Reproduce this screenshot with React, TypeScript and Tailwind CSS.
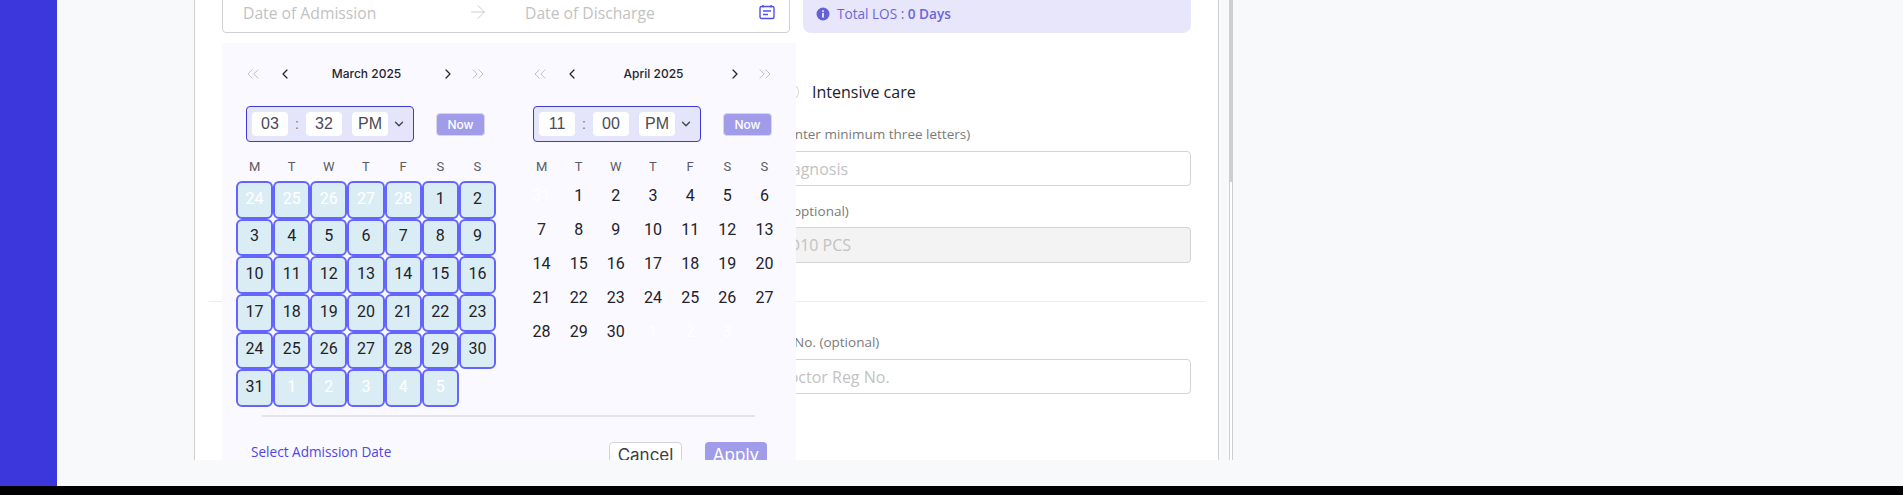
import React from 'react';
import { ArrowRight, ChevronDown, ChevronLeft, ChevronRight, ChevronsLeft, ChevronsRight } from 'lucide-react';

const WEEK = ['M', 'T', 'W', 'T', 'F', 'S', 'S'];

interface Day {
  label: number;
  muted?: boolean;
}

function range(from: number, to: number, muted = false): Day[] {
  const days: Day[] = [];
  for (let i = from; i <= to; i++) days.push({ label: i, muted });
  return days;
}

const MARCH = [...range(24, 28, true), ...range(1, 31), ...range(1, 5, true)];
const APRIL = [{ label: 31, muted: true }, ...range(1, 30), ...range(1, 3, true)];

function TimeField({ value }: { value: string }) {
  return (
    <span className="flex h-[24px] w-[36px] items-center justify-center rounded-[4px] bg-white font-['Liberation_Sans',sans-serif] text-[16px] text-[#4a4a55]">
      {value}
    </span>
  );
}

function Calendar({ title, hour, minute, days, selected }: { title: string; hour: string; minute: string; days: Day[]; selected?: boolean }) {
  return (
    <div className="w-[260px]">
      <div className="mt-[1px] flex h-[20px] items-center pl-[7px] pr-[8px]">
        <ChevronsLeft size={20} strokeWidth={1} className="text-[#b4b4c4]" />
        <ChevronLeft size={16} strokeWidth={1.8} className="ml-[14px] text-[#22222a]" />
        <span className="flex-1 text-center font-['Inter',sans-serif] text-[12px] font-medium text-[#25252d]">{title}</span>
        <ChevronRight size={16} strokeWidth={1.8} className="text-[#22222a]" />
        <ChevronsRight size={20} strokeWidth={1} className="ml-[12px] text-[#b4b4c4]" />
      </div>

      <div className="mt-[22px] flex items-center pl-[10px]">
        <div className="flex h-[36px] w-[168px] items-center rounded-[4px] border border-[#3d38d8] bg-[#e4e4fa] pl-[5px]">
          <TimeField value={hour} />
          <span className="w-[18px] text-center font-['Liberation_Sans',sans-serif] text-[14px] text-[#777]">:</span>
          <TimeField value={minute} />
          <span className="w-[10px]" />
          <TimeField value="PM" />
          <ChevronDown size={14} strokeWidth={2.4} className="ml-[4px] text-[#44444e]" />
        </div>
        <button className="ml-[22px] h-[23px] w-[49px] rounded-[4px] border border-[#d6d6e4] bg-[#a09ce9] pt-[1px] font-['Inter',sans-serif] text-[12px] font-medium text-white">
          Now
        </button>
      </div>

      <div className="mt-[15px] grid h-[18px] grid-cols-7 items-center text-center font-['Roboto',sans-serif] text-[13px] text-[#5a5a64]">
        {WEEK.map((d, i) => (
          <span key={i}>{d}</span>
        ))}
      </div>

      <div className={selected ? 'mt-[6px] grid grid-cols-7' : 'mt-[4px] grid grid-cols-7'}>
        {days.map((d, i) => (
          <span
            key={i}
            className={
              (selected
                ? 'h-[37.67px] rounded-[6px] border-2 border-[#6464ff] bg-[#dbedf4] pb-[2px] '
                : 'h-[34px] ') +
              "flex items-center justify-center font-['Roboto',sans-serif] text-[16px] " +
              (d.muted ? 'text-white' : 'text-[#22222a]')
            }
          >
            {d.label}
          </span>
        ))}
      </div>
    </div>
  );
}

function DatePopup() {
  return (
    <div className="absolute left-[27px] top-[43px] h-[440px] w-[574px] bg-[#faf9ff] pt-[20px]">
      <div className="flex gap-[27px] pl-[14px]">
        <Calendar title="March 2025" hour="03" minute="32" days={MARCH} selected />
        <Calendar title="April 2025" hour="11" minute="00" days={APRIL} />
      </div>
      <div className="ml-[40px] mt-[8px] h-[2px] w-[493px] bg-[#e4e4e8]" />
      <div className="mt-[25px] flex items-start justify-between pl-[29px] pr-[29px]">
        <span className="font-['Open_Sans',sans-serif] text-[13.6px] leading-[20px] text-[#4f46e5]">Select Admission Date</span>
        <div className="flex gap-[23px]">
          <button className="h-[27px] w-[73px] rounded-[4px] border border-[#d4d4d8] bg-white font-['Inter',sans-serif] text-[17px] leading-[25px] text-[#3c3c44]">
            Cancel
          </button>
          <button className="h-[27px] w-[62px] rounded-[4px] bg-[#a09ce9] font-['Inter',sans-serif] text-[17px] leading-[27px] text-white">
            Apply
          </button>
        </div>
      </div>
    </div>
  );
}

function CalendarIcon() {
  return (
    <svg width="16" height="16" viewBox="0 0 16 16" fill="none" stroke="#5050f0" strokeWidth="1.4">
      <rect x="1" y="2.5" width="14" height="12" rx="1.5" />
      <path d="M4 1v2.5M12 1v2.5M4 7h8M4 10.5h5" />
    </svg>
  );
}

function InfoIcon() {
  return (
    <svg width="14" height="14" viewBox="0 0 14 14">
      <circle cx="7" cy="7" r="6.5" fill="#6460d8" />
      <rect x="6.2" y="6" width="1.6" height="4.5" fill="#fff" />
      <rect x="6.2" y="3.4" width="1.6" height="1.6" fill="#fff" />
    </svg>
  );
}

function Label({ children, indent }: { children: React.ReactNode; indent: string }) {
  return <div className={'h-[18px] text-[13.5px] leading-[18px] text-[#7a7a7a] ' + indent}>{children}</div>;
}

function Field({ placeholder, disabled, indent }: { placeholder: string; disabled?: boolean; indent: string }) {
  return (
    <div
      className={
        'flex items-center rounded-[4px] border border-[#d4d4d4] text-[16px] text-[#c2c2c2] ' +
        indent +
        (disabled ? ' h-[36px] bg-[#f3f3f3]' : ' h-[35px] bg-white')
      }
    >
      {placeholder}
    </div>
  );
}

export default function App() {
  return (
    <div className="flex h-[495px] flex-col overflow-hidden bg-black font-['Open_Sans',sans-serif]">
      <div className="flex h-[486px] bg-[#f8f9fb]">
        <div className="w-[57px] bg-[#3b37dc]" />

        <div className="relative ml-[137px] h-[460px] w-[1025px] overflow-hidden border-x border-[#cfcfcf] bg-white">
          <div className="-mt-[10px] ml-[27px] flex gap-[13px]">
            <div className="flex h-[43px] w-[568px] items-center rounded-[4px] border border-[#d0d0d0] pl-[20px] pt-[5px] text-[15.7px] text-[#c2c2c2]">
              <span className="w-[224px]">Date of Admission</span>
              <ArrowRight size={22} strokeWidth={1} className="-mt-[5px] text-[#c8c8c8]" />
              <span className="ml-[36px] flex-1">Date of Discharge</span>
              <span className="-mt-[4px] mr-[14px]">
                <CalendarIcon />
              </span>
            </div>
            <div className="flex h-[43px] w-[388px] items-center gap-[7px] rounded-[8px] bg-[#e8e6fb] pl-[13px] pt-[5px] text-[13.6px] text-[#6b66d8]">
              <InfoIcon />
              <span>
                Total LOS : <b className="font-semibold">0 Days</b>
              </span>
            </div>
          </div>

          <div className="ml-auto mr-[27px] w-[491px]">
            <div className="mt-[47px] flex h-[24px] items-center pl-[81px] text-[16px] text-[#22222a]">
              <span className="h-[18px] w-[18px] rounded-full border border-[#d4d4d4]" />
              <span className="ml-[13px]">Intensive care</span>
            </div>
            <div className="mt-[21px]">
              <Label indent="pl-[19px]">Diagnosis (Enter minimum three letters)</Label>
            </div>
            <div className="mt-[8px]">
              <Field placeholder="Enter Diagnosis" indent="pl-[31px]" />
            </div>
            <div className="mt-[16px]">
              <Label indent="pl-[20px]">Procedure (optional)</Label>
            </div>
            <div className="mt-[7px]">
              <Field placeholder="ICD10 PCS" indent="pl-[73px]" disabled />
            </div>
          </div>

          <div className="ml-[14px] mt-[38px] h-px w-[996px] bg-[#ececec]" />

          <div className="ml-auto mr-[27px] w-[491px]">
            <div className="mt-[31px]">
              <Label indent="pl-[21px]">Doctor Reg No. (optional)</Label>
            </div>
            <div className="mt-[8px]">
              <Field placeholder="Enter Doctor Reg No." indent="pl-[32px]" />
            </div>
          </div>

          <DatePopup />
        </div>

        <div className="ml-[10px] flex h-[460px] w-[4px] flex-col border-x border-[#cfcfcf] bg-white">
          <div className="h-[182px] bg-[#cfcfcf]" />
        </div>
      </div>
    </div>
  );
}
